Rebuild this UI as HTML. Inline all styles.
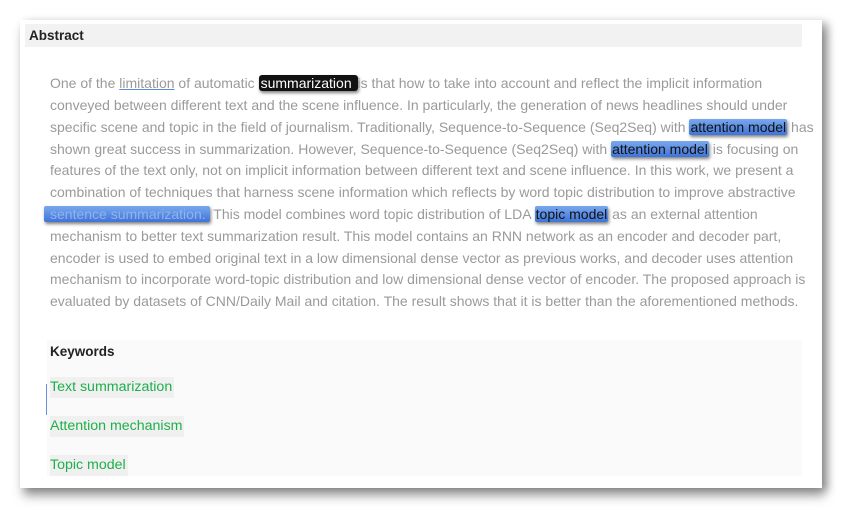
<!DOCTYPE html>
<html><head><style>
body{margin:0;width:863px;height:530px;background:#fff;position:relative;overflow:hidden;font-family:"Liberation Sans",sans-serif}
.card{position:absolute;left:20px;top:20px;width:802px;height:468px;background:#fff;box-shadow:3px 8px 10px rgba(0,0,0,.35),6px 2px 8px rgba(0,0,0,.25)}
.hdr{position:absolute;left:25px;top:24px;width:777px;height:23px;background:#f2f2f2}
.hdr span{position:absolute;left:4px;top:4px;font-weight:bold;font-size:13.5px;color:#222}
.l{position:absolute;left:50px;white-space:nowrap;font-size:14px;color:#9a9a9a;line-height:16px}
.b{background:linear-gradient(#7aa8ee,#3f74d8);color:#111;border-radius:2px;box-shadow:1px 2px 3px rgba(0,0,0,.5);padding:0 1px}
.k{background:#111;color:#fff;border-radius:3px;box-shadow:1px 2px 3px rgba(0,0,0,.5);padding:0 2px}
.kw{position:absolute;left:47px;top:340px;width:755px;height:136px;background:#fafafa}
.kt{position:absolute;left:50px;top:344px;font-weight:bold;font-size:13.5px;color:#222}
.g{position:absolute;left:50px;background:#f0f0f0;color:#1db04b;font-size:14.2px;padding:2px 2px 3px 0;}
</style></head><body>
<div class="card"></div>
<div class="hdr"><span>Abstract</span></div>
<div class="l" style="top:75px">One of the <u style="text-decoration-color:#5a8ae0">limitation</u> of automatic <span class="k">summarization </span> is that how to take into account and reflect the implicit information</div>
<div class="l" style="top:97px">conveyed between different text and the scene influence. In particularly, the generation of news headlines should under</div>
<div class="l" style="top:119px">specific scene and topic in the field of journalism. Traditionally, Sequence-to-Sequence (Seq2Seq) with <span class="b">attention model</span> has</div>
<div class="l" style="top:141px">shown great success in summarization. However, Sequence-to-Sequence (Seq2Seq) with <span class="b">attention model</span> is focusing on</div>
<div class="l" style="top:162px">features of the text only, not on implicit information between different text and scene influence. In this work, we present a</div>
<div class="l" style="top:184px">combination of techniques that harness scene information which reflects by word topic distribution to improve abstractive</div>
<div class="l" style="top:206px;left:44px"><span class="b" style="color:#8fb4ee;padding:0 4px 0 6px">sentence summarization.</span> This model combines word topic distribution of LDA <span class="b">topic model</span> as an external attention</div>
<div class="l" style="top:228px">mechanism to better text summarization result. This model contains an RNN network as an encoder and decoder part,</div>
<div class="l" style="top:250px">encoder is used to embed original text in a low dimensional dense vector as previous works, and decoder uses attention</div>
<div class="l" style="top:271px">mechanism to incorporate word-topic distribution and low dimensional dense vector of encoder. The proposed approach is</div>
<div class="l" style="top:293px">evaluated by datasets of CNN/Daily Mail and citation. The result shows that it is better than the aforementioned methods.</div>
<div class="kw"></div>
<div class="kt">Keywords</div>
<div style="position:absolute;left:46px;top:384px;width:1px;height:31px;background:#6a8fe0"></div>
<div class="g" style="top:377px">Text summarization</div>
<div class="g" style="top:416px">Attention mechanism</div>
<div class="g" style="top:455px">Topic model</div>
</body></html>
